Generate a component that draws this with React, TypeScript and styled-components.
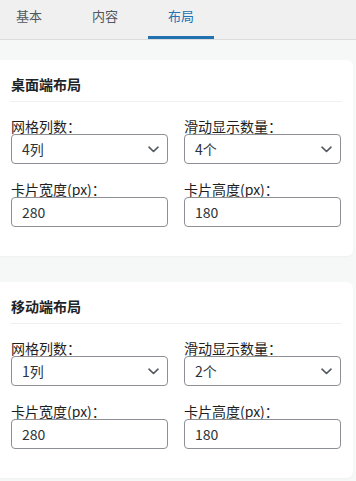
import { FC } from "react";
import styled, { createGlobalStyle } from "styled-components";

const GlobalStyle = createGlobalStyle`
  body {
    margin: 0;
    background: #f6f7f7;
    font-family: "Noto Sans CJK SC", "Noto Sans", sans-serif;
  }
`;

type LayoutSection = {
  title: string;
  columns: string;
  slides: string;
  width: string;
  height: string;
};

const sections: LayoutSection[] = [
  { title: "桌面端布局", columns: "4列", slides: "4个", width: "280", height: "180" },
  { title: "移动端布局", columns: "1列", slides: "2个", width: "280", height: "180" },
];

const Chevron: FC = () => (
  <svg width="11" height="7" viewBox="0 0 11 7" fill="none">
    <path d="M1 1.2l4.5 4.3L10 1.2" stroke="#50575e" strokeWidth="1.6" strokeLinecap="round" strokeLinejoin="round" />
  </svg>
);

const SelectField: FC<{ label: string; value: string }> = ({ label, value }) => (
  <Field>
    <Label>{label}</Label>
    <SelectBox>
      <span>{value}</span>
      <Chevron />
    </SelectBox>
  </Field>
);

const InputField: FC<{ label: string; value: string }> = ({ label, value }) => (
  <Field>
    <Label>{label}</Label>
    <TextInput value={value} readOnly />
  </Field>
);

const App: FC = () => {
  return (
    <>
      <GlobalStyle />
      <TabBar>
        <Tab>基本</Tab>
        <Tab>内容</Tab>
        <Tab $active>布局</Tab>
      </TabBar>
      <Content>
        {sections.map((s) => (
          <Card key={s.title}>
            <CardTitle>{s.title}</CardTitle>
            <FieldGrid>
              <SelectField label="网格列数：" value={s.columns} />
              <SelectField label="滑动显示数量：" value={s.slides} />
              <InputField label="卡片宽度(px)：" value={s.width} />
              <InputField label="卡片高度(px)：" value={s.height} />
            </FieldGrid>
          </Card>
        ))}
      </Content>
    </>
  );
};

export default App;

const TabBar = styled.div`
  display: flex;
  gap: 10px;
  height: 40px;
  box-sizing: border-box;
  padding-left: 0;
  margin-left: -4px;
  padding-left: 0;
  background: #f0f0f1;
  border-bottom: 1px solid #dcdcde;
`;

const Tab = styled.div<{ $active?: boolean }>`
  height: 39px;
  box-sizing: border-box;
  padding: 6px 20px 0;
  font-size: 13px;
  line-height: 19px;
  color: ${(p) => (p.$active ? "#2271b1" : "#50575e")};
  border-bottom: 3px solid ${(p) => (p.$active ? "#2271b1" : "transparent")};
`;

const Content = styled.div`
  padding-top: 20px;
`;

const Card = styled.div`
  background: #ffffff;
  margin: 0 3px 26px 0;
  padding: 0 12px 29px 11px;
  border-radius: 0 6px 6px 0;
  box-shadow: 0 1px 2px rgba(0, 0, 0, 0.03);
`;

const CardTitle = styled.h3`
  margin: 0 -1px 0 -1px;
  padding: 14px 1px 7px;
  font-size: 14px;
  line-height: 20px;
  font-weight: 700;
  color: #1d2327;
  border-bottom: 1px solid #f0f0f1;
`;

const FieldGrid = styled.div`
  display: grid;
  grid-template-columns: 1fr 1fr;
  column-gap: 16px;
  row-gap: 17px;
  margin-top: 16px;
`;

const Field = styled.div`
  display: flex;
  flex-direction: column;
  min-width: 0;
`;

const Label = styled.label`
  font-size: 14px;
  line-height: 16px;
  color: #1e1e1e;
  white-space: nowrap;
`;

const SelectBox = styled.div`
  display: flex;
  align-items: center;
  justify-content: space-between;
  height: 30px;
  box-sizing: border-box;
  padding: 0 8px 0 10px;
  border: 1px solid #8c8f94;
  border-radius: 4px;
  font-size: 14px;
  color: #2c3338;
`;

const TextInput = styled.input`
  width: 100%;
  height: 30px;
  box-sizing: border-box;
  margin: 0;
  padding: 0 10px;
  border: 1px solid #8c8f94;
  border-radius: 4px;
  font-family: "Noto Sans CJK SC", "Noto Sans", sans-serif;
  font-size: 14px;
  color: #2c3338;
  background: #ffffff;
  outline: none;
`;
